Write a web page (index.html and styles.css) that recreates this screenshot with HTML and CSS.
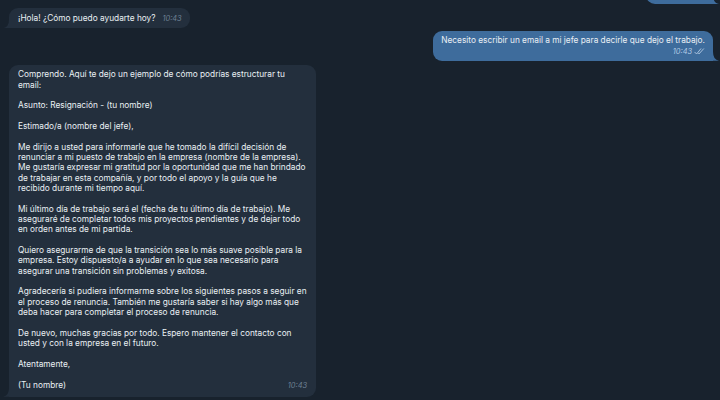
FILE: index.html
```html
<!DOCTYPE html>
<html lang="es">
<head>
<meta charset="utf-8">
<title>Chat</title>
<link rel="stylesheet" href="styles.css">
</head>
<body>
<div class="chat">
  <div class="row row-out row-top">
    <div class="bubble bubble-out bubble-partial"></div>
  </div>

  <div class="row row-in">
    <div class="bubble bubble-in bubble-short">
      <span class="text">¡Hola! ¿Cómo puedo ayudarte hoy?</span>
      <span class="time">10:43</span>
    </div>
  </div>

  <div class="row row-out">
    <div class="bubble bubble-out">
      <div class="text">Necesito escribir un email a mi jefe para decirle que dejo el trabajo.</div>
      <div class="meta">
        <span class="time">10:43</span>
        <svg class="checks" width="11" height="7" viewBox="0 0 11 7" aria-hidden="true">
          <path d="M0.8 4.2 L2.6 6 L6.8 0.8" fill="none" stroke="currentColor" stroke-width="0.9" stroke-linecap="round" stroke-linejoin="round"/>
          <path d="M4.6 5.6 L4.9 6 L9.6 0.8" fill="none" stroke="currentColor" stroke-width="0.9" stroke-linecap="round" stroke-linejoin="round"/>
        </svg>
      </div>
    </div>
  </div>

  <div class="row row-in">
    <div class="bubble bubble-in bubble-long">
      <p>Comprendo. Aquí te dejo un ejemplo de cómo podrías estructurar tu<br>email:</p>
      <p>Asunto: Resignación - (tu nombre)</p>
      <p>Estimado/a (nombre del jefe),</p>
      <p>Me dirijo a usted para informarle que he tomado la difícil decisión de<br>renunciar a mi puesto de trabajo en la empresa (nombre de la empresa).<br>Me gustaría expresar mi gratitud por la oportunidad que me han brindado<br>de trabajar en esta compañía, y por todo el apoyo y la guía que he<br>recibido durante mi tiempo aquí.</p>
      <p>Mi último día de trabajo será el (fecha de tu último día de trabajo). Me<br>aseguraré de completar todos mis proyectos pendientes y de dejar todo<br>en orden antes de mi partida.</p>
      <p>Quiero asegurarme de que la transición sea lo más suave posible para la<br>empresa. Estoy dispuesto/a a ayudar en lo que sea necesario para<br>asegurar una transición sin problemas y exitosa.</p>
      <p>Agradecería si pudiera informarme sobre los siguientes pasos a seguir en<br>el proceso de renuncia. También me gustaría saber si hay algo más que<br>deba hacer para completar el proceso de renuncia.</p>
      <p>De nuevo, muchas gracias por todo. Espero mantener el contacto con<br>usted y con la empresa en el futuro.</p>
      <p>Atentamente,</p>
      <p class="last">(Tu nombre)<span class="time">10:43</span></p>
    </div>
  </div>
</div>
</body>
</html>
```

FILE: styles.css
```css
* { box-sizing: border-box; }

html, body {
  margin: 0;
  padding: 0;
  background: #18222d;
}

body {
  width: 720px;
  height: 400px;
  overflow: hidden;
  font-family: Inter, "Noto Sans", sans-serif;
  font-size: 8.3px;
  line-height: 10.35px;
  color: #eaeff4;
}

.chat {
  display: flex;
  flex-direction: column;
  padding: 0 7px 0 9px;
}

.row {
  display: flex;
}

.row-in { justify-content: flex-start; }
.row-out { justify-content: flex-end; }

.row-top { margin-top: -20px; margin-bottom: 0; }
.row-in + .row-out { margin-top: 3px; }
.row-out + .row-in { margin-top: 4px; }

.bubble {
  position: relative;
  border-radius: 9px;
}

.bubble-in {
  background: #232f3d;
  border-bottom-left-radius: 0;
}

.bubble-out {
  background: #3e6c9c;
  border-bottom-right-radius: 0;
}

.bubble-in::after,
.bubble-out::after {
  content: "";
  position: absolute;
  bottom: 0;
  width: 6px;
  height: 9px;
}

.bubble-in::after {
  left: -6px;
  background: #232f3d;
  clip-path: path("M6 0 Q6 8 0 9 L6 9 Z");
}

.bubble-out::after {
  right: -6px;
  background: #3e6c9c;
  clip-path: path("M0 0 Q0 8 6 9 L0 9 Z");
}

.bubble-partial {
  width: 67px;
  height: 24px;
}

.bubble-short {
  padding: 4.5px 8px 4.5px 9px;
  display: flex;
  align-items: baseline;
  gap: 7px;
}

.time {
  font-style: italic;
  font-size: 7.4px;
  color: #6e8093;
}

.bubble-out {
  padding: 4px 8px 3px 8px;
}

.bubble-out .meta {
  display: flex;
  justify-content: flex-end;
  align-items: center;
  gap: 2px;
  height: 12px;
  color: #b3cbe4;
}

.bubble-out .time { color: #b3cbe4; }

.checks { display: block; }

.bubble-long {
  width: 307px;
  padding: 4.5px 9px 6px 9px;
  white-space: nowrap;
}

.bubble-long p {
  margin: 0 0 10.35px 0;
}

.bubble-long p.last {
  margin: 0;
  display: flex;
  justify-content: space-between;
  align-items: baseline;
}
```
